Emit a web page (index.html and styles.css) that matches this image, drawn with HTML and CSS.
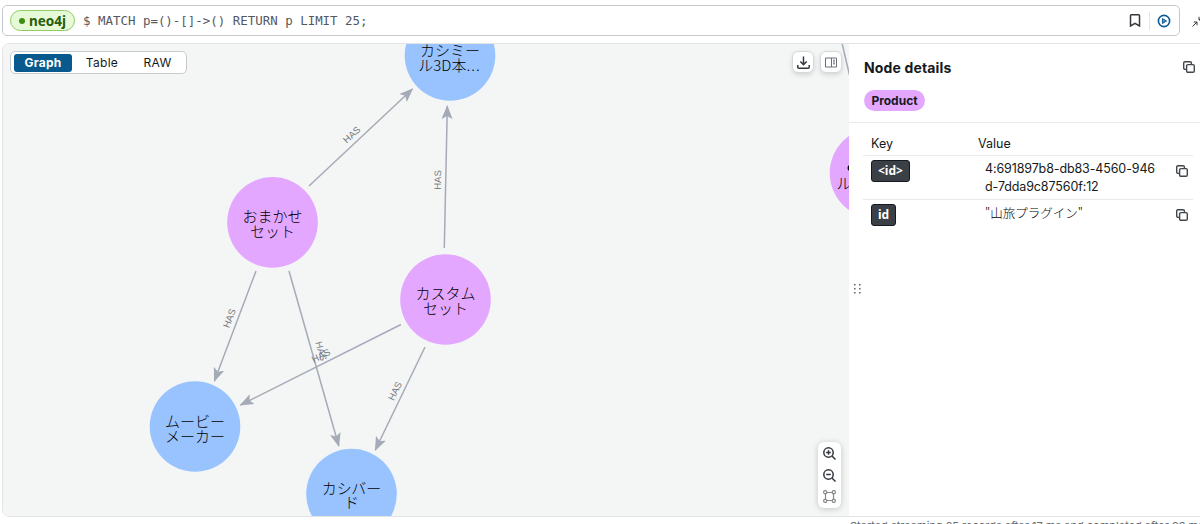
FILE: index.html
```html
<!DOCTYPE html>
<html lang="ja">
<head>
  <meta charset="utf-8">
  <title>Neo4j Browser</title>
  <link rel="stylesheet" href="styles.css">
</head>
<body>
  <svg class="defs" width="0" height="0">
    <symbol id="copy" viewBox="0 0 12 12">
      <path d="M3.200 8.400H2A1.300 1.300 0 0 1 .7 7.100V2A1.300 1.300 0 0 1 2 .7h5.100A1.300 1.300 0 0 1 8.400 2v1.200"/>
      <rect x="3.600" y="3.600" width="7.700" height="7.700" rx="1.300"/>
    </symbol>
  </svg>

  <div class="top">
    <div class="editor">
      <span class="db"><i></i>neo4j</span>
      <code>$ MATCH p=()-[]-&gt;() RETURN p LIMIT 25;</code>
      <svg class="bookmark" width="12" height="13" viewBox="0 0 12 13"><path d="M1.500 1.600q0-.8.8-.8h7.400q.8 0 .8.8V12L6 9.400 1.500 12z"/></svg>
      <span class="divider"></span>
      <svg class="run" width="14" height="14" viewBox="0 0 14 14"><circle cx="7" cy="7" r="5.600"/><path d="M5.400 4.500v5L9.500 7z"/></svg>
    </div>
    <svg class="shrink" width="12" height="12" viewBox="0 0 12 12"><path d="M.5 11.500 5 7M1.800 7H5v3.200M11.500.5 7 5M7 1.800V5h3.200"/></svg>
  </div>

  <div class="frame">
    <div class="graph">
      <svg class="canvas" width="846" height="472" viewBox="3 44 846 472">
        <defs>
          <marker id="arrow" markerUnits="userSpaceOnUse" markerWidth="14" markerHeight="12" refX="13" refY="6" orient="auto">
            <path d="M0 .5 14 6 0 11.500 3 6z" fill="#a5abb6"/>
          </marker>
        </defs>
        <g class="edges">
          <path d="M309 186 412.500 89"/>
          <path d="M444.300 248 447.300 106"/>
          <path d="M256 271 214.400 381"/>
          <path d="M289 271 338.800 446"/>
          <path d="M401 324.500 240.500 405"/>
          <path d="M425 347 375.300 450"/>
          <path class="plain" d="M842 43 849.500 75"/>
        </g>
        <g class="labels">
          <text transform="translate(354 137) rotate(-43)">HAS</text>
          <text transform="translate(441 180) rotate(-89)">HAS</text>
          <text transform="translate(232.500 319.500) rotate(-69)">HAS</text>
          <text transform="translate(318 352) rotate(74)">HAS</text>
          <text transform="translate(322.500 358.500) rotate(-27)">HAS</text>
          <text transform="translate(398 392.500) rotate(-64)">HAS</text>
        </g>
        <g class="nodes">
          <circle class="plugin" cx="450" cy="55.500" r="45.300"/>
          <text x="450" y="55.500">カシミー</text><text x="449.500" y="70.500">ル3D本<tspan class="dots">...</tspan></text>
          <circle class="product" cx="272.500" cy="222.400" r="45.300"/>
          <text x="272.500" y="222">おまかせ</text><text x="272.500" y="237">セット</text>
          <circle class="product" cx="445.500" cy="299.500" r="45.300"/>
          <text x="445.500" y="299">カスタム</text><text x="445.500" y="314">セット</text>
          <circle class="plugin" cx="195" cy="426.500" r="45.300"/>
          <text x="195" y="426.500">ムービー</text><text x="195" y="441.500">メーカー</text>
          <circle class="plugin" cx="351.500" cy="494" r="45.300"/>
          <text x="351.500" y="494">カシバー</text><text x="351.500" y="508">ド</text>
          <circle class="product" cx="875" cy="173" r="45.300"/>
          <circle class="dot" cx="850.500" cy="168" r="3"/>
          <text class="start" x="836.500" y="189">ル</text>
        </g>
      </svg>

      <div class="tabs"><span class="active">Graph</span><span>Table</span><span>RAW</span></div>
      <div class="tools">
        <button><svg width="13" height="13" viewBox="0 0 13 13"><path d="M6.500.5v8M3.300 5.500l3.200 3.200 3.200-3.200M.8 9v2.200q0 1 1 1h9.400q1 0 1-1V9"/></svg></button>
        <button><svg class="thin" width="12" height="11" viewBox="0 0 12 11"><path d="M.5 1h11v9H.5zM6.500 1v9M8 3.200h2M8 5h2M8 6.800h2"/></svg></button>
      </div>
      <div class="zoom">
        <svg width="13" height="13" viewBox="0 0 13 13"><circle cx="5.500" cy="5.500" r="4.700"/><path d="m9 9 3.500 3.500M5.500 3.200v4.600M3.200 5.500h4.600"/></svg>
        <svg width="13" height="13" viewBox="0 0 13 13"><circle cx="5.500" cy="5.500" r="4.700"/><path d="m9 9 3.500 3.500M3.200 5.500h4.600"/></svg>
        <svg class="fit" width="13" height="13" viewBox="0 0 13 13"><path d="M4 2.500h5M4 10.500h5M2.500 4v5M10.500 4v5"/><rect x=".7" y=".7" width="3" height="3" rx="1"/><rect x="9.300" y=".7" width="3" height="3" rx="1"/><rect x=".7" y="9.300" width="3" height="3" rx="1"/><rect x="9.300" y="9.300" width="3" height="3" rx="1"/></svg>
      </div>
    </div>

    <div class="details">
      <svg class="grip" width="7" height="10" viewBox="0 0 7 10"><path d="M0 0h1.600v1.600H0zM5 0h1.600v1.600H5zM0 4h1.600v1.600H0zM5 4h1.600v1.600H5zM0 8h1.600v1.600H0zM5 8h1.600v1.600H5z"/></svg>
      <div class="head">
        <h3>Node details</h3>
        <svg class="copy"><use href="#copy"/></svg>
      </div>
      <div class="type"><span>Product</span></div>
      <div class="props">
        <div class="row keys"><span>Key</span><span>Value</span></div>
        <div class="row id">
          <b>&lt;id&gt;</b>
          <span class="value">4:691897b8-db83-4560-946<br>d-7dda9c87560f:12</span>
          <svg class="copy"><use href="#copy"/></svg>
        </div>
        <div class="row">
          <b>id</b>
          <span class="value jp">"山旅プラグイン"</span>
          <svg class="copy"><use href="#copy"/></svg>
        </div>
      </div>
    </div>
  </div>
  <div class="status">Started streaming 25 records after 17 ms and completed after 93 ms.</div>
</body>
</html>
```
FILE: styles.css
```css
* { box-sizing: border-box; }
body {
  margin: 0;
  height: 524px;
  overflow: hidden;
  background: #fff;
  color: #151a20;
  font-family: Inter, "Noto Sans CJK JP", sans-serif;
  font-size: 13px;
}
svg { fill: none; stroke: #33383f; stroke-width: 1.5; flex: none; display: block; }
.defs { display: none; }

.top { display: flex; align-items: center; padding: 5px 0 0 2px; width: 1220px; }
.editor {
  display: flex;
  align-items: center;
  width: 1178px;
  height: 31px;
  padding: 0 8px 0 7px;
  border: 1px solid #c4c8cd;
  border-radius: 5px;
}
.db {
  display: flex;
  align-items: center;
  width: 65px;
  height: 21px;
  padding-left: 8px;
  border: 1px solid #90cb62;
  border-radius: 11px;
  background: #e7fad7;
  color: #275e0a;
  font: bold 13.5px "Noto Sans", sans-serif;
}
.db i { width: 6px; height: 6px; margin-right: 4px; border-radius: 50%; background: #3f8e12; }
.editor code { flex: 1; margin-left: 8px; color: #535861; font: 12.45px "DejaVu Sans Mono", monospace; }
.bookmark { margin-right: 8px; }
.divider { width: 1px; height: 18px; margin-right: 7px; background: #e2e4e6; }
.run { stroke: #0b5c94; stroke-width: 1.6; }
.run path { fill: #5595bd; stroke-width: 1; }
.shrink { margin-left: 12px; stroke-width: 1; }

.frame {
  display: flex;
  width: 1220px;
  height: 474px;
  margin: 7px 0 0 2px;
  border: 1px solid #e2e4e6;
  border-radius: 7px;
  overflow: hidden;
}
.graph { position: relative; width: 846px; height: 472px; background: #f4f6f6; overflow: hidden; }
.canvas { stroke: none; }
.edges path { stroke: #a5abb6; stroke-width: 1.5; marker-end: url(#arrow); }
.edges .plain { marker-end: none; }
.labels { fill: #777b80; font: 9.5px "Liberation Sans", sans-serif; text-anchor: middle; }
.nodes { fill: #000; font: 300 15px "Noto Sans CJK JP", sans-serif; text-anchor: middle; }
.nodes .start { text-anchor: start; }
.nodes .dots { letter-spacing: 1px; }
.plugin { fill: #99c3ff; }
.product { fill: #e4a7ff; }

/* controls floating over the graph */
.tabs {
  position: absolute;
  left: 7px;
  top: 7px;
  display: flex;
  align-items: center;
  width: 177px;
  height: 23px;
  padding-left: 3px;
  border: 1px solid #c7cbd0;
  border-radius: 5px;
  background: #fff;
}
.tabs span { width: 58px; line-height: 18px; text-align: center; font-size: 12px; letter-spacing: .3px; }
.tabs span:nth-child(2) { width: 60px; }
.tabs span:nth-child(3) { width: 51px; }
.tabs .active { border-radius: 3px; background: #07598e; color: #fff; font-weight: 700; }
.tools { position: absolute; right: 7px; top: 7px; display: flex; gap: 6px; }
.tools button {
  display: flex;
  align-items: center;
  justify-content: center;
  width: 22px;
  height: 22px;
  padding: 0;
  border: 1px solid #d5d8dc;
  border-radius: 6px;
  background: #fff;
  box-shadow: 0 2px 5px #0002;
}
.tools .thin { stroke: #6b7078; stroke-width: 1; }
.zoom {
  position: absolute;
  right: 8px;
  top: 398px;
  display: flex;
  flex-direction: column;
  align-items: center;
  gap: 8.5px;
  width: 23px;
  height: 66px;
  padding-top: 5px;
  border-radius: 6px;
  background: #fff;
  box-shadow: 0 1px 6px #0003;
}
.zoom .fit { stroke: #85898e; stroke-width: 1.2; }

.details { position: relative; width: 372px; background: #fff; }
.grip { position: absolute; left: 5px; top: 240px; fill: #686c72; stroke: none; }
.copy { width: 12px; height: 12px; stroke: #41464d; stroke-width: 1.4; }
.head { display: flex; align-items: center; height: 46px; padding-left: 15px; }
.head h3 { width: 319px; margin: 0; font-size: 14px; font-weight: 700; letter-spacing: .15px; }
.type { height: 33px; padding-left: 15px; border-bottom: 1px solid #e8e9eb; }
.type span {
  display: inline-block;
  width: 61px;
  line-height: 21px;
  border-radius: 11px;
  background: #e4a7ff;
  text-align: center;
  font-size: 12px;
  font-weight: 700;
}
.props { width: 330px; margin-left: 14px; padding-top: 8px; }
.row { display: flex; align-items: flex-start; padding: 4px 0 0 8px; }
.row + .row { border-top: 1px solid #e8e9eb; }
.keys { height: 24px; padding-top: 5px; font-size: 12.5px; }
.keys span:first-child { width: 107px; }
.id { height: 44px; }
.row b {
  height: 22px;
  padding: 0 6px;
  border: 1px solid #151a20;
  border-radius: 3px;
  background: #3b3f46;
  color: #fff;
  font: bold 12px/20px "Noto Sans", sans-serif;
}
.value { width: 191px; margin-left: auto; font-size: 12.5px; line-height: 18px; letter-spacing: -.12px; }
.row .copy { margin: 5px 5px 0 0; }
.jp { color: #000; font-family: "Noto Sans CJK JP", sans-serif; font-weight: 300; letter-spacing: 0; }
.status { padding: 2px 0 0 850px; color: #666b72; font-size: 11px; line-height: 14px; white-space: nowrap; }
```
